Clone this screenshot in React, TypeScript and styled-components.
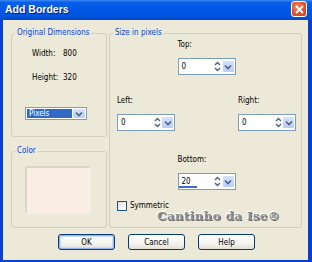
import { createGlobalStyle, styled } from "styled-components";

const GlobalStyle = createGlobalStyle`
  html, body {
    margin: 0;
    padding: 0;
    background: #ffffff;
  }
  body {
    font-family: "DejaVu Sans Condensed", "Liberation Sans", Arial, sans-serif;
    font-size: 8px;
    color: #000;
  }
`;

const Window = styled.div`
  width: 312px;
  height: 262px;
  box-sizing: border-box;
  display: flex;
  flex-direction: column;
  background: #0a3fd4;
  overflow: hidden;
`;

const TitleBar = styled.div`
  height: 20px;
  flex: none;
  display: flex;
  align-items: flex-start;
  justify-content: space-between;
  padding: 1px 5px 0 5px;
  box-sizing: border-box;
  background: linear-gradient(180deg, #3d8af7 0%, #0a5fe8 12%, #0058e6 50%, #0053dd 85%, #0147c9 100%);
`;

const Title = styled.span`
  color: #fff;
  font-family: "Liberation Sans", Arial, sans-serif;
  font-weight: bold;
  font-size: 10.5px;
  line-height: 17px;
  text-shadow: 1px 1px 0 #0a1b80;
`;

const CloseButton = styled.div`
  width: 16px;
  height: 16px;
  box-sizing: border-box;
  border: 1px solid #fff;
  border-radius: 3px;
  background: radial-gradient(circle at 40% 35%, #f08a68 0%, #e2522c 55%, #cc3f18 100%);
  display: flex;
  align-items: center;
  justify-content: center;
`;

const Body = styled.div`
  flex: 1;
  margin: 0 4px 2px 3px;
  background: #ece9d8;
  padding: 8px 6px 10px 8px;
  display: flex;
  flex-direction: column;
  box-sizing: border-box;
`;

const Columns = styled.div`
  flex: 1;
  display: flex;
  gap: 2px;
  min-height: 0;
`;

const LeftColumn = styled.div`
  width: 96px;
  display: flex;
  flex-direction: column;
  gap: 9px;
`;

const Group = styled.fieldset<{ $h?: number; $grow?: boolean }>`
  margin: 0;
  padding: 0;
  min-width: 0;
  border: 1px solid #d0d0bf;
  border-radius: 3px;
  box-sizing: border-box;
  ${(p) => (p.$h ? `height: ${p.$h}px; flex: none;` : "")}
  ${(p) => (p.$grow ? "flex: 1;" : "")}
`;

const Legend = styled.legend`
  color: #0046d5;
  padding: 0 2px;
  margin-left: 3px;
  font-size: 8px;
  line-height: 10px;
`;

const DimGrid = styled.div`
  display: grid;
  grid-template-columns: 31px auto;
  row-gap: 14px;
  padding: 11px 0 0 20px;
  line-height: 10px;
`;

const Select = styled.div`
  margin: 24px 0 0 13px;
  width: 62px;
  height: 13px;
  box-sizing: border-box;
  border: 1px solid #7f9db9;
  background: #fff;
  display: flex;
  padding: 1px;
  gap: 1px;
`;

const SelectValue = styled.div`
  flex: 1;
  background: #316ac5;
  color: #fff;
  line-height: 9px;
  padding-left: 2px;
`;

const DropButton = styled.div<{ $w?: number }>`
  width: ${(p) => p.$w ?? 12}px;
  background: linear-gradient(180deg, #d6e2fd 0%, #b9cdf8 100%);
  border-radius: 1px;
  display: flex;
  align-items: center;
  justify-content: center;
`;

const Swatch = styled.div`
  margin: 10px 0 0 13px;
  width: 66px;
  height: 48px;
  box-sizing: border-box;
  background: #faede4;
  border: 2px solid #d9d5c7;
  border-right-color: #f2f0e6;
  border-bottom-color: #f2f0e6;
`;

const SizeArea = styled.div`
  display: flex;
  flex-direction: column;
  padding: 2px 5px 0 7px;
`;

const Field = styled.div<{ $center?: boolean; $top?: number }>`
  display: flex;
  flex-direction: column;
  gap: 8px;
  ${(p) => (p.$center ? "align-self: center;" : "")}
  ${(p) => (p.$top ? `margin-top: ${p.$top}px;` : "")}
`;

const FieldLabel = styled.div`
  line-height: 10px;
  height: 10px;
`;

const MiddleRow = styled.div`
  display: flex;
  justify-content: space-between;
  margin-top: 21px;
`;

const SpinBox = styled.div`
  position: relative;
  width: 58px;
  height: 17px;
  box-sizing: border-box;
  border: 1px solid #7f9db9;
  background: #fff;
  display: flex;
  align-items: stretch;
  padding: 2px 1px 2px 3px;
`;

const SpinValue = styled.div`
  flex: 1;
  line-height: 11px;
`;

const SpinArrows = styled.div`
  width: 8px;
  display: flex;
  align-items: center;
  justify-content: center;
  margin-right: 1px;
`;

const Progress = styled.div`
  position: absolute;
  left: 0;
  bottom: 1px;
  width: 18px;
  height: 2px;
  background: #3a6ec8;
`;

const CheckRow = styled.label`
  display: flex;
  align-items: center;
  gap: 3px;
  margin-top: 11px;
  line-height: 10px;
`;

const CheckBox = styled.span`
  width: 10px;
  height: 10px;
  box-sizing: border-box;
  border: 1px solid #1c5180;
  background: linear-gradient(135deg, #dcdcd7 0%, #ffffff 80%);
`;

const Watermark = styled.div`
  align-self: flex-end;
  margin: -1px 16px 0 0;
  font-family: "DejaVu Serif", "Liberation Serif", serif;
  font-weight: bold;
  font-size: 11.5px;
  line-height: 13px;
  letter-spacing: 0.6px;
  color: #8c8c8c;
  text-shadow: -1px -1px 0 #fff, 1px 1px 0 #6a6a6a;
`;

const ButtonRow = styled.div`
  margin-top: 6px;
  display: flex;
  justify-content: center;
  gap: 13px;
`;

const Button = styled.div<{ $default?: boolean }>`
  width: 57px;
  height: 16px;
  box-sizing: border-box;
  border: 1px solid #003c74;
  border-radius: 3px;
  background: linear-gradient(180deg, #ffffff 0%, #f4f3ee 60%, #e3e1d6 100%);
  display: flex;
  align-items: center;
  justify-content: center;
  ${(p) => (p.$default ? "box-shadow: inset 0 0 0 1px #98b4ee, inset 0 0 0 2px #cddaf8;" : "")}
`;

const Chevron = () => (
  <svg width="8" height="6" viewBox="0 0 8 6">
    <path d="M1 1.5 L4 4.5 L7 1.5" fill="none" stroke="#4d6185" strokeWidth="1.6" />
  </svg>
);

const UpDown = () => (
  <svg width="7" height="11" viewBox="0 0 7 11">
    <path d="M1 4 L3.5 1.5 L6 4 M1 7 L3.5 9.5 L6 7" fill="none" stroke="#4d6185" strokeWidth="1.4" />
  </svg>
);

function Spin({ value, progress }: { value: string; progress?: boolean }) {
  return (
    <SpinBox>
      <SpinValue>{value}</SpinValue>
      <SpinArrows>
        <UpDown />
      </SpinArrows>
      <DropButton $w={11}>
        <Chevron />
      </DropButton>
      {progress && <Progress />}
    </SpinBox>
  );
}

export default function App() {
  return (
    <>
      <GlobalStyle />
      <Window>
        <TitleBar>
          <Title>Add Borders</Title>
          <CloseButton>
            <svg width="9" height="9" viewBox="0 0 9 9">
              <path d="M1 1 L8 8 M8 1 L1 8" stroke="#fff" strokeWidth="1.8" />
            </svg>
          </CloseButton>
        </TitleBar>
        <Body>
          <Columns>
            <LeftColumn>
              <Group $h={109}>
                <Legend>Original Dimensions</Legend>
                <DimGrid>
                  <span>Width:</span>
                  <span>800</span>
                  <span>Height:</span>
                  <span>320</span>
                </DimGrid>
                <Select>
                  <SelectValue>Pixels</SelectValue>
                  <DropButton>
                    <Chevron />
                  </DropButton>
                </Select>
              </Group>
              <Group $grow>
                <Legend>Color</Legend>
                <Swatch />
              </Group>
            </LeftColumn>
            <Group $grow>
              <Legend>Size in pixels</Legend>
              <SizeArea>
                <Field $center>
                  <FieldLabel>Top:</FieldLabel>
                  <Spin value="0" />
                </Field>
                <MiddleRow>
                  <Field>
                    <FieldLabel>Left:</FieldLabel>
                    <Spin value="0" />
                  </Field>
                  <Field>
                    <FieldLabel>Right:</FieldLabel>
                    <Spin value="0" />
                  </Field>
                </MiddleRow>
                <Field $center $top={24}>
                  <FieldLabel>Bottom:</FieldLabel>
                  <Spin value="20" progress />
                </Field>
                <CheckRow>
                  <CheckBox />
                  Symmetric
                </CheckRow>
                <Watermark>Cantinho da Ise®</Watermark>
              </SizeArea>
            </Group>
          </Columns>
          <ButtonRow>
            <Button $default>OK</Button>
            <Button>Cancel</Button>
            <Button>Help</Button>
          </ButtonRow>
        </Body>
      </Window>
    </>
  );
}
